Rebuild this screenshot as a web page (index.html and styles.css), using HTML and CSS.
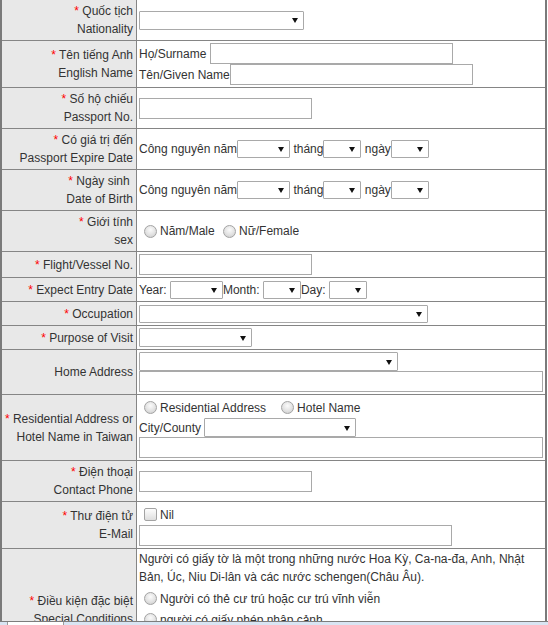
FILE: index.html
```html
<!DOCTYPE html>
<html lang="vi">
<head>
    <meta charset="UTF-8">
    <title>Đăng ký thông tin nhập cảnh</title>
    <link rel="stylesheet" href="styles.css">
</head>
<body>

    <table class="form-table">
        <tr class="row-2line">
            <th><span class="req">*</span> Quốc tịch<br>Nationality</th>
            <td>
                <div class="ln"><span class="sel"><select class="w165 tall"></select></span></div>
            </td>
        </tr>
        <tr class="row-name">
            <th><span class="req">*</span> Tên tiếng Anh<br>English Name</th>
            <td>
                <div class="ln">Họ/Surname&nbsp;<input type="text" class="txt w243"></div>
                <div class="ln">Tên/Given Name<input type="text" class="txt w243"></div>
            </td>
        </tr>
        <tr class="row-2line">
            <th><span class="req">*</span> Số hộ chiếu<br>Passport No.</th>
            <td>
                <div class="ln"><input type="text" class="txt w173"></div>
            </td>
        </tr>
        <tr class="row-2line">
            <th><span class="req">*</span> Có giá trị đến<br>Passport Expire Date</th>
            <td>
                <div class="ln">
                    Công nguyên năm<span class="sel"><select class="w53"></select></span>&nbsp;tháng<span class="sel"><select class="w38"></select></span>&nbsp;ngày<span class="sel"><select class="w38"></select></span>
                </div>
            </td>
        </tr>
        <tr class="row-2line">
            <th><span class="req">*</span> Ngày sinh&nbsp;<br>Date of Birth</th>
            <td>
                <div class="ln">
                    Công nguyên năm<span class="sel"><select class="w53"></select></span>&nbsp;tháng<span class="sel"><select class="w38"></select></span>&nbsp;ngày<span class="sel"><select class="w38"></select></span>
                </div>
            </td>
        </tr>
        <tr class="row-2line">
            <th><span class="req">*</span> Giới tính<br>sex</th>
            <td>
                <div class="ln">
                    <input type="radio" name="sex">Năm/Male&nbsp;<input type="radio" name="sex">Nữ/Female
                </div>
            </td>
        </tr>
        <tr class="row-flight">
            <th><span class="req">*</span> Flight/Vessel No.</th>
            <td>
                <div class="ln"><input type="text" class="txt w173"></div>
            </td>
        </tr>
        <tr class="row-1line">
            <th><span class="req">*</span> Expect Entry Date</th>
            <td>
                <div class="ln">
                    Year:&nbsp;<span class="sel"><select class="w53"></select></span>Month:&nbsp;<span class="sel"><select class="w38"></select></span>Day:&nbsp;<span class="sel"><select class="w38"></select></span>
                </div>
            </td>
        </tr>
        <tr class="row-1line">
            <th><span class="req">*</span> Occupation</th>
            <td>
                <div class="ln"><span class="sel"><select class="w289"></select></span></div>
            </td>
        </tr>
        <tr class="row-1line">
            <th><span class="req">*</span> Purpose of Visit</th>
            <td>
                <div class="ln"><span class="sel"><select class="w113 tall"></select></span></div>
            </td>
        </tr>
        <tr class="row-home">
            <th>Home Address</th>
            <td>
                <div class="ln ln-sel"><span class="sel"><select class="w259 tall"></select></span></div>
                <div class="ln"><input type="text" class="txt w404"></div>
            </td>
        </tr>
        <tr class="row-stay">
            <th><span class="req">*</span> Residential Address or<br>Hotel Name in Taiwan</th>
            <td>
                <div class="ln">
                    <input type="radio" name="stay">Residential Address&nbsp;&nbsp;&nbsp;<input type="radio" name="stay">Hotel Name
                </div>
                <div class="ln ln-sel">City/County&nbsp;<span class="sel"><select class="w152 tall"></select></span></div>
                <div class="ln"><input type="text" class="txt w404"></div>
            </td>
        </tr>
        <tr class="row-2line">
            <th><span class="req">*</span> Điện thoại<br>Contact Phone</th>
            <td>
                <div class="ln"><input type="text" class="txt w173"></div>
            </td>
        </tr>
        <tr class="row-name">
            <th><span class="req">*</span> Thư điện tử<br>E-Mail</th>
            <td>
                <div class="ln"><input type="checkbox">Nil</div>
                <div class="ln"><input type="text" class="txt w313"></div>
            </td>
        </tr>
        <tr class="row-special">
            <th><span class="req">*</span> Điều kiện đặc biệt<br>Special Conditions</th>
            <td class="top">
                <p class="note">Người có giấy tờ là một trong những nước Hoa Kỳ, Ca-na-đa, Anh, Nhật Bản, Úc, Niu Di-lân và các nước schengen(Châu Âu).</p>
                <div class="ln opt"><input type="radio" name="special">Người có thẻ cư trú hoặc cư trú vĩnh viễn</div>
                <div class="ln opt"><input type="radio" name="special">người có giấy phép nhập cảnh</div>
            </td>
        </tr>
    </table>

    <!-- window status strip -->
    <div class="status-bar"><span class="status-tab"></span></div>

</body>
</html>
```

FILE: styles.css
```css
body {
    margin: 0;
    font-family: "Liberation Sans", Arial, sans-serif;
    font-size: 12px;
    color: #333;
    background: #fff;
}

.form-table {
    width: 547px;
    border-collapse: separate;
    border-spacing: 0;
    table-layout: fixed;
    border-left: 2px solid #7a7a7a;
    border-right: 2px solid #7a7a7a;
}

.form-table th {
    width: 135px;
    box-sizing: border-box;
    padding: 0 3px 0 0;
    background: #e8e8e8;
    border-right: 1px solid #858585;
    border-bottom: 1px solid #858585;
    text-align: right;
    font-weight: normal;
    line-height: 18px;
    vertical-align: middle;
}

.form-table td {
    padding: 0 2px;
    border-bottom: 1px solid #858585;
    line-height: 18px;
    vertical-align: middle;
}

.form-table td.top {
    vertical-align: top;
    padding-top: 1px;
}

/* row heights, bottom border included */
.row-1line { height: 24px; }
.row-flight { height: 26px; }
.row-2line { height: 41px; }
.row-home { height: 45px; }
.row-name { height: 47px; }
.row-stay { height: 66px; }
.row-special { height: 123px; }

.req {
    color: #f00;
}

.ln {
    display: flex;
    align-items: center;
    height: 21px;
    white-space: nowrap;
}

.ln-sel {
    height: 19px;
}

.opt {
    height: 21px;
}

.note + .opt {
    margin-top: 2px;
}

.note {
    margin: 0;
}

/* text boxes */
.txt {
    height: 21px;
    box-sizing: border-box;
    margin: 0;
    padding: 1px 2px;
    border: 1px solid #a9a9a9;
    font: inherit;
    background: #fff;
}

/* drop-downs with a small black arrow */
.sel {
    position: relative;
    display: inline-block;
}

.sel::after {
    content: "";
    position: absolute;
    right: 6px;
    top: 50%;
    margin-top: -2px;
    border-left: 3px solid transparent;
    border-right: 3px solid transparent;
    border-top: 5px solid #111;
    pointer-events: none;
}

select {
    -webkit-appearance: none;
    appearance: none;
    display: block;
    height: 18px;
    box-sizing: border-box;
    margin: 0;
    padding: 0 4px;
    border: 1px solid #a9a9a9;
    border-radius: 1px;
    background: #fff;
    font: inherit;
}

select.tall { height: 19px; }

.w38 { width: 38px; }
.w53 { width: 53px; }
.w113 { width: 113px; }
.w152 { width: 152px; }
.w165 { width: 165px; }
.w173 { width: 173px; }
.w243 { width: 243px; }
.w259 { width: 259px; }
.w289 { width: 289px; }
.w313 { width: 313px; }
.w404 { width: 404px; }

input[type="radio"],
input[type="checkbox"] {
    -webkit-appearance: none;
    appearance: none;
    flex-shrink: 0;
    width: 13px;
    height: 13px;
    box-sizing: border-box;
    border: 1px solid #a3a3a3;
    background: radial-gradient(circle at 50% 35%, #fbfbfb 0, #e2e2e2 55%, #c9c9c9 100%);
}

input[type="radio"] {
    margin: 0 3px 0 5px;
    border-radius: 50%;
}

input[type="checkbox"] {
    margin: 0 3px 0 5px;
    border-radius: 2px;
    background: linear-gradient(#fdfdfd, #dedede);
}

.status-bar {
    position: fixed;
    left: 0;
    right: 0;
    bottom: 0;
    height: 3px;
    border-top: 1px solid #7d7d7d;
    background: #d9e5f3;
}

.status-tab {
    position: absolute;
    left: 7px;
    top: 0;
    width: 55px;
    height: 3px;
    background: #fff;
    border-left: 1px solid #9a9a9a;
    border-right: 1px solid #9a9a9a;
}
```
